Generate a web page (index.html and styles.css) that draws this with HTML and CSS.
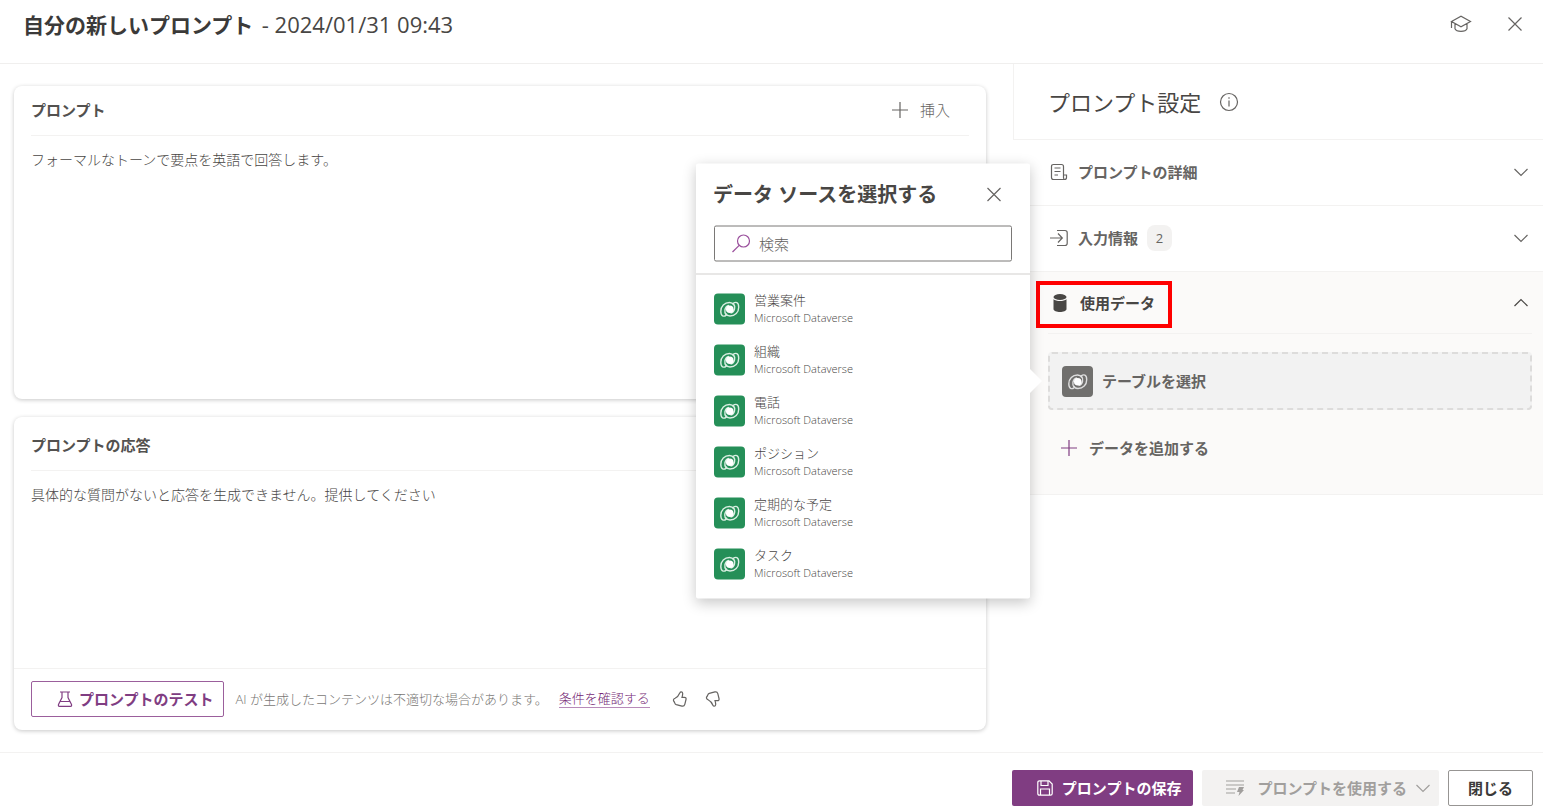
FILE: index.html
```html
<!DOCTYPE html>
<html lang="ja">
<head>
<meta charset="utf-8">
<meta name="viewport" content="width=device-width, initial-scale=1">
<title>自分の新しいプロンプト</title>
<link rel="stylesheet" href="styles.css">
</head>
<body>
<svg class="sprite" aria-hidden="true">
  <symbol id="close" viewBox="0 0 16 16"><path d="M1.5 1.5l13 13M14.5 1.5l-13 13"/></symbol>
  <symbol id="plus" viewBox="0 0 18 18"><path d="M9 1v16M1 9h16"/></symbol>
  <symbol id="chevron" viewBox="0 0 16 16"><path d="M1.5 5L8 11.5 14.5 5"/></symbol>
  <symbol id="dataverse" viewBox="0 0 31 31">
    <path d="M20 11.500C18.800 9.800 17.300 9 15.500 9C10.500 9 6.800 12.500 6.800 17.800C6.800 23 9.800 23.500 12.300 21.600C9.800 19 10.300 13 15 12"/>
    <path d="M11.500 20C12.700 21.700 14.200 22.500 16 22.500C21 22.500 24.700 19 24.700 13.700C24.700 8.500 21.700 8 19.200 9.900C21.700 12.500 21.200 18.500 16.500 19.500"/>
    <circle class="core" cx="15.750" cy="15.750" r="3.800"/>
  </symbol>
</svg>

<header class="topbar">
  <h1>自分の新しいプロンプト <span>- 2024/01/31 09:43</span></h1>
  <div class="topbar-actions">
    <button class="icon-button" aria-label="学習">
      <svg class="icon icon-cap" viewBox="0 0 22 18"><path d="M1.500 6.500L11 1.200l9.500 5.300L11 11.800zM1.500 6.500V13M5 8.500v5.300C6.500 17.200 15.500 17.200 17 13.800V8.500"/></svg>
    </button>
    <button class="icon-button" aria-label="閉じる"><svg class="icon"><use href="#close"/></svg></button>
  </div>
</header>

<main class="workspace">
  <div class="editor">
    <section class="card">
      <div class="card-head">
        <h2>プロンプト</h2>
        <button class="insert"><svg class="icon icon-plus"><use href="#plus"/></svg>挿入</button>
      </div>
      <p class="card-text">フォーマルなトーンで要点を英語で回答します。</p>
    </section>
    <section class="card">
      <div class="card-head response-head"><h2>プロンプトの応答</h2></div>
      <p class="card-text">具体的な質問がないと応答を生成できません。提供してください</p>
      <div class="card-foot">
        <button class="button outline">
          <svg class="icon" viewBox="0 0 16 16"><path d="M3 1h10M5 1v5.500L1.500 13.500Q1 15.300 2.500 15.300h11q1.500 0 1-1.800L11 6.500V1M3.500 10.500h9"/></svg>プロンプトのテスト
        </button>
        <p class="notice">AI が生成したコンテンツは不適切な場合があります。</p>
        <a href="#terms">条件を確認する</a>
        <button class="icon-button vote" aria-label="良い">
          <svg class="icon" viewBox="0 0 16 16"><path d="M9.300 .8C11 .8 11 3 10 6.300h2.300c1.500 0 2 .9 1.700 2.200l-1.200 4.800c-.4 1.500-1.400 2.200-2.900 1.800L4.300 13.600c-1-.3-1.300-.8-1.600-1.800-.2-.8-.5-1.100-1-1.700-.6-1 0-2.300 1.400-2.800C5.800 6 7 4 7.900 1.800c.2-.6.700-1 1.400-1z"/></svg>
        </button>
        <button class="icon-button vote" aria-label="悪い">
          <svg class="icon" viewBox="0 0 16 16"><path d="M9.300 15.200C11 15.200 11 13 10 9.700h2.300c1.500 0 2-.9 1.700-2.200l-1.200-4.800C12.400 1.200 11.400.5 9.900.9L4.300 2.400c-1 .3-1.300.8-1.600 1.800-.2.800-.5 1.100-1 1.700-.6 1 0 2.300 1.400 2.800C5.800 10 7 12 7.900 14.200c.2.600.7 1 1.400 1z"/></svg>
        </button>
      </div>
    </section>
  </div>

  <aside class="settings">
    <div class="settings-title">
      <h2>プロンプト設定</h2>
      <svg class="icon icon-info" viewBox="0 0 20 20"><circle cx="10" cy="10" r="8.500"/><path d="M10 8.500v6M10 5.300v1.500"/></svg>
    </div>
    <button class="row" aria-expanded="false">
      <svg class="icon icon-row" viewBox="0 0 18 18"><path d="M3.500 1.500h8q2 0 2 2V12h3v2.500q0 2-2 2h-11q-2 0-2-2v-11q0-2 2-2zM13.500 12v2.500q0 2 1.200 2M4.500 5h6M4.500 8.500h6M4.500 12h3.500"/></svg>
      <span>プロンプトの詳細</span>
      <svg class="icon chevron"><use href="#chevron"/></svg>
    </button>
    <button class="row" aria-expanded="false">
      <svg class="icon icon-row" viewBox="0 0 18 18"><path d="M0 9h12M8 4.500L12.300 9 8 13.500M7 1.500h8q2.200 0 2.200 2.200v10.600q0 2.200-2.200 2.200H7"/></svg>
      <span>入力情報</span><span class="count">2</span>
      <svg class="icon chevron"><use href="#chevron"/></svg>
    </button>
    <section class="data-section">
      <button class="row open" aria-expanded="true">
        <svg class="icon icon-db" viewBox="0 0 18 20"><ellipse cx="9" cy="4" rx="6.500" ry="3"/><path d="M2.500 6.200C5 8.600 13 8.600 15.500 6.200V16c0 4-13 4-13 0z"/></svg>
        <span>使用データ</span>
        <svg class="icon chevron up"><use href="#chevron"/></svg>
      </button>
      <div class="picker-anchor">
        <button class="picker"><svg class="tile gray"><use href="#dataverse"/></svg>テーブルを選択</button>
        <div class="popover" role="dialog" aria-labelledby="source-title">
          <div class="popover-head">
            <h2 id="source-title">データ ソースを選択する</h2>
            <button class="icon-button" aria-label="閉じる"><svg class="icon"><use href="#close"/></svg></button>
          </div>
          <label class="search">
            <svg class="icon icon-search" viewBox="0 0 20 20"><circle cx="12.500" cy="7.500" r="6"/><path d="M8.200 11.800L1.500 18.500"/></svg>
            <input type="search" placeholder="検索" aria-label="検索">
          </label>
          <ul class="sources">
            <li><button><svg class="tile"><use href="#dataverse"/></svg><span>営業案件<small>Microsoft Dataverse</small></span></button></li>
            <li><button><svg class="tile"><use href="#dataverse"/></svg><span>組織<small>Microsoft Dataverse</small></span></button></li>
            <li><button><svg class="tile"><use href="#dataverse"/></svg><span>電話<small>Microsoft Dataverse</small></span></button></li>
            <li><button><svg class="tile"><use href="#dataverse"/></svg><span>ポジション<small>Microsoft Dataverse</small></span></button></li>
            <li><button><svg class="tile"><use href="#dataverse"/></svg><span>定期的な予定<small>Microsoft Dataverse</small></span></button></li>
            <li><button><svg class="tile"><use href="#dataverse"/></svg><span>タスク<small>Microsoft Dataverse</small></span></button></li>
          </ul>
        </div>
      </div>
      <button class="add"><svg class="icon icon-plus"><use href="#plus"/></svg>データを追加する</button>
    </section>
  </aside>
</main>

<footer class="bottombar">
  <button class="button primary">
    <svg class="icon" viewBox="0 0 16 16"><path d="M2.500.800h9.500L15.200 4v9.500q0 1.700-1.700 1.700h-11Q.8 15.200.8 13.500v-11Q.8.800 2.500.800zM4 1v4.500h7V1M3.500 15V9h9v6"/></svg>プロンプトの保存
  </button>
  <button class="button muted" disabled>
    <svg class="icon icon-use" viewBox="0 0 20 18"><path d="M1 2h18M1 6h18M1 10h10M1 14h9"/><path class="bolt" d="M14 8h5l-1.500 3H19l-5.500 6 1-4H12z"/></svg>プロンプトを使用する<svg class="icon chevron-small"><use href="#chevron"/></svg>
  </button>
  <button class="button plain">閉じる</button>
</footer>
</body>
</html>
```
FILE: styles.css
```css
*, *::before, *::after { box-sizing: border-box; }

body {
  margin: 0;
  min-height: 100vh;
  display: flex;
  flex-direction: column;
  background: #fff;
  color: #666462;
  font: 15px/20px "Open Sans", "Noto Sans CJK JP", sans-serif;
}

h1, h2, p, ul { margin: 0; padding: 0; }

button {
  padding: 0;
  border: 0;
  background: none;
  color: inherit;
  font: inherit;
  white-space: nowrap;
}

.sprite { position: absolute; width: 0; height: 0; }

.icon {
  flex: none;
  width: 16px;
  height: 16px;
  fill: none;
  stroke: currentColor;
  stroke-width: 1.2;
}

.icon-plus { width: 18px; height: 18px; }
.icon-button { display: flex; }

.topbar {
  height: 64px;
  display: flex;
  justify-content: space-between;
  padding: 10px 20px 0 23px;
  border-bottom: 1px solid #f0efee;
}

h1 {
  color: #3b3a39;
  font-size: 21px;
  line-height: 28px;
  font-weight: 700;
}

h1 span { margin-left: 3px; color: #484644; font-size: 22px; font-weight: 500; }

.topbar-actions {
  height: 28px;
  display: flex;
  align-items: center;
  gap: 35px;
}

.icon-cap { width: 22px; height: 18px; }

.workspace {
  flex: 1;
  display: grid;
  grid-template-columns: 1fr 530px;
}

.editor {
  display: grid;
  grid-template-rows: 1fr 1fr;
  gap: 18px;
  padding: 22px 27px 22px 14px;
}

.card {
  display: flex;
  flex-direction: column;
  border-radius: 8px;
  box-shadow: 0 1px 4px rgba(0, 0, 0, .22);
}

.card-head {
  height: 50px;
  display: flex;
  align-items: center;
  justify-content: space-between;
  margin: 0 17px;
  padding: 0 19px 2px 0;
  border-bottom: 1px solid #f3f2f1;
}

.response-head { height: 54px; padding-top: 4px; }

.card-head h2 {
  color: #53514f;
  font-size: 15px;
  line-height: 20px;
}

.insert { display: flex; align-items: center; gap: 11px; font-weight: 300; }

.card-text {
  flex: 1;
  padding: 14px 17px;
  color: #484644;
  font-size: 14px;
  font-weight: 300;
}

.card-foot {
  height: 62px;
  display: flex;
  align-items: center;
  padding: 0 17px 2px;
  border-top: 1px solid #f3f2f1;
  font-size: 13px;
  font-weight: 300;
}

.notice { margin: 0 11px 0 12px; color: #797775; }

.card-foot a {
  margin-right: 22px;
  border-bottom: 1px solid #b88ab9;
  color: #742774;
  text-decoration: none;
  line-height: 18px;
}

.vote + .vote { margin-left: 17px; }

.button {
  height: 36px;
  display: flex;
  align-items: center;
  justify-content: center;
  border-radius: 2px;
  font-size: 15px;
  font-weight: 700;
}

.outline {
  gap: 6px;
  padding: 0 9px 0 25px;
  border: 1px solid #9b5f9c;
  color: #803d82;
}

.settings-title {
  height: 76px;
  display: flex;
  align-items: center;
  gap: 18px;
  padding: 1px 0 0 34px;
  border-left: 1px solid #f3f2f1;
  border-bottom: 1px solid #f3f2f1;
}

.settings-title h2 {
  color: #484644;
  font-size: 22px;
  line-height: 30px;
  font-weight: 400;
}

.icon-info { width: 20px; height: 20px; }

.row {
  width: 100%;
  height: 66px;
  display: flex;
  align-items: center;
  gap: 9px;
  padding: 0 14px 2px 36px;
  border-bottom: 1px solid #f3f2f1;
  font-weight: 700;
}

.icon-row { width: 20px; height: 18px; }
.chevron { margin-left: auto; }
.up { transform: rotate(180deg); }

.count {
  width: 25px;
  height: 26px;
  border-radius: 8px;
  background: #f3f2f1;
  font-size: 13px;
  line-height: 26px;
  font-weight: 400;
  text-align: center;
}

.data-section {
  padding: 0 11px 36px 35px;
  border-bottom: 1px solid #f3f2f1;
  background: #fbfaf9;
}

.open {
  position: relative;
  height: 62px;
  gap: 10px;
  padding: 1px 3px 0 2px;
  color: #484644;
}

.open::after {
  content: "";
  position: absolute;
  top: 9px;
  left: -12px;
  width: 136px;
  height: 47px;
  border: 4px solid #f00;
}

.icon-db { width: 20px; height: 20px; fill: currentColor; stroke: none; }

.picker-anchor { position: relative; margin-top: 18px; }

.picker {
  width: 100%;
  height: 58px;
  display: flex;
  align-items: center;
  gap: 9px;
  padding: 0 12px;
  border: 2px dashed #dddcdb;
  border-radius: 4px;
  background: #f2f2f2;
  font-weight: 700;
}

.tile {
  flex: none;
  width: 31px;
  height: 31px;
  border-radius: 4px;
  background: #258f58;
  fill: none;
  stroke: #d8eee1;
  stroke-width: 1.4;
}

.gray { background: #706f6d; stroke: #dedede; }
.core { fill: #fff; stroke: none; }

.add {
  display: flex;
  align-items: center;
  gap: 11px;
  margin-top: 28px;
  padding-left: 12px;
  font-weight: 700;
}

.add .icon { color: #803d82; }

.popover {
  position: absolute;
  top: 50%;
  right: calc(100% + 18px);
  transform: translateY(-50%);
  width: 334px;
  border-radius: 2px;
  background: #fff;
  box-shadow: 0 4px 14px rgba(0, 0, 0, .22);
}

.popover::after {
  content: "";
  position: absolute;
  top: 50%;
  right: -12px;
  width: 13px;
  height: 26px;
  margin-top: -13px;
  background: #fff;
  clip-path: polygon(0 0, 100% 50%, 0 100%);
}

.popover-head {
  height: 62px;
  display: flex;
  align-items: center;
  justify-content: space-between;
  padding: 0 28px 0 17px;
}

.popover-head h2 { color: #484644; font-size: 20px; line-height: 28px; }

.search {
  height: 36px;
  display: flex;
  align-items: center;
  gap: 8px;
  margin: 0 18px 12px;
  padding: 0 16px;
  border: 1px solid #7a7876;
  border-radius: 2px;
}

.icon-search { width: 20px; height: 20px; color: #9a4f9c; }

.search input {
  flex: 1;
  min-width: 0;
  padding: 0;
  border: 0;
  outline: 0;
  background: none;
  font: inherit;
  font-weight: 300;
}

.search input::placeholder { color: #605e5c; }

.sources {
  display: grid;
  gap: 15px;
  padding: 16px 18px 17px;
  border-top: 1px solid #d2d0ce;
  list-style: none;
}

.sources button {
  width: 100%;
  height: 36px;
  display: flex;
  align-items: center;
  gap: 9px;
  color: #484644;
  font-size: 13px;
  line-height: 18px;
  font-weight: 300;
  text-align: left;
}

.sources small { display: block; font-size: 11px; }

.bottombar {
  height: 60px;
  display: flex;
  justify-content: flex-end;
  gap: 9px;
  padding: 17px 10px 7px;
  border-top: 1px solid #f3f2f1;
}

.primary { gap: 9px; padding: 0 12px 0 25px; background: #803d82; color: #fff; }
.muted { gap: 12px; padding: 0 8px 0 23px; background: #f3f2f1; color: #a19f9d; }
.icon-use { width: 20px; height: 18px; }
.bolt { fill: currentColor; stroke: none; }
.chevron-small { margin-left: -4px; }
.plain { padding: 0 19px; border: 1px solid #979593; color: #3b3a39; }
```
